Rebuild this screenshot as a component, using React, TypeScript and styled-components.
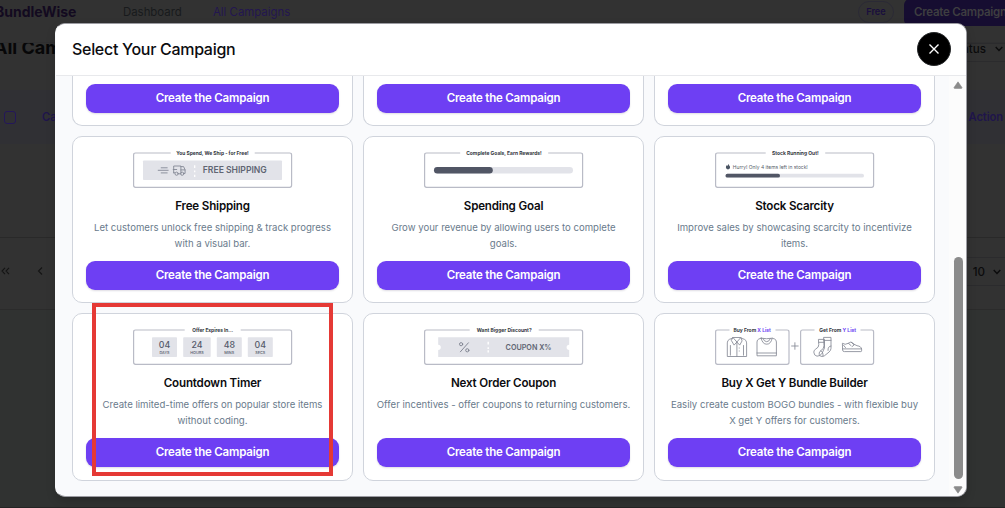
import React from "react";
import styled, { createGlobalStyle } from "styled-components";

const Global = createGlobalStyle`
  * { box-sizing: border-box; }
  html, body { margin: 0; padding: 0; overflow: hidden; }
  body { font-family: Inter, "Liberation Sans", sans-serif; background: #323232; }
`;

const Screen = styled.div`
  position: relative;
  width: 1005px;
  height: 508px;
  overflow: hidden;
  background: #323232;
`;

const NavBar = styled.header`
  display: flex;
  align-items: center;
  height: 43px;
  padding-bottom: 19px;
  border-bottom: 1px solid #2f2f30;
`;

const Brand = styled.div`
  width: 123px;
  margin-left: -5px;
  font-size: 14px;
  font-weight: 700;
  color: #130a20;
  white-space: nowrap;
`;

const NavLink = styled.a<{ $active?: boolean; $width: number }>`
  width: ${(p) => p.$width}px;
  margin-left: 5px;
  font-size: 11.4px;
  font-weight: 400;
  white-space: nowrap;
  color: ${(p) => (p.$active ? "#231650" : "#181a1c")};
`;

const PlanBadge = styled.span`
  display: grid;
  place-items: center;
  flex: none;
  width: 36px;
  height: 22px;
  margin-left: auto;
  border: 1px solid #2b2a35;
  border-radius: 11px;
  font-size: 9.2px;
  font-weight: 600;
  color: #190e3d;
`;

const NavButton = styled.button`
  flex: none;
  width: 112px;
  height: 27px;
  margin: 1px -11px 0 10px;
  padding: 0 0 0 10px;
  border: 0;
  border-radius: 6px;
  background: #160d31;
  color: #3e3e40;
  font: 600 11.5px Inter, sans-serif;
  letter-spacing: -0.25px;
  text-align: left;
  white-space: nowrap;
`;

const PageHead = styled.div`
  display: flex;
  justify-content: space-between;
  height: 47px;
  overflow: hidden;
`;

const PageTitle = styled.div`
  margin: -7px 0 0 -6px;
  font-size: 18px;
  line-height: 24px;
  font-weight: 700;
  color: #070708;
`;

const SelectBox = styled.div<{ $height: number; $gap: number; $right: number; $lift?: number }>`
  display: flex;
  align-items: center;
  justify-content: flex-end;
  gap: ${(p) => p.$gap}px;
  width: 100px;
  height: ${(p) => p.$height}px;
  padding: 0 ${(p) => p.$right}px ${(p) => p.$lift ?? 0}px 0;
  border-top: 1px solid #2b2b2d;
  border-bottom: 1px solid #2b2b2d;
  font-size: 11.6px;
  font-weight: 500;
  color: #0b0b0c;
`;

const TableHead = styled.div`
  display: flex;
  align-items: center;
  height: 54px;
  padding: 0 2px 0 4px;
  background: #303034;
  color: #1f154b;
  font-size: 11.2px;
  font-weight: 600;
`;

const Check = styled.span`
  width: 12px;
  height: 13px;
  border: 1px solid #24175a;
  border-radius: 3px;
  margin-right: 26px;
`;

const Push = styled.span`
  margin-left: auto;
  letter-spacing: -0.1px;
`;

const TableBody = styled.div`
  height: 94px;
  border-bottom: 1px solid #292929;
`;

const Pager = styled.div`
  display: flex;
  align-items: flex-start;
  justify-content: space-between;
  height: 72px;
  padding-top: 19px;
  border-bottom: 1px solid #2b2b2b;
`;

const PageArrows = styled.div`
  display: flex;
  gap: 27px;
  padding-top: 10px;
`;

const Foot = styled.div`
  height: 198px;
  background: #303231;
  border-bottom: 1px solid #242424;
`;

const Modal = styled.section`
  position: absolute;
  left: 55px;
  top: 23px;
  display: flex;
  flex-direction: column;
  width: 912px;
  height: 474px;
  overflow: hidden;
  border: 1px solid #9c9ca2;
  border-left-color: #f9fafc;
  border-radius: 10px;
  background: #f9fafc;
  box-shadow: 0 4px 10px rgba(0, 0, 0, 0.16);
`;

const ModalHeader = styled.div`
  display: flex;
  align-items: center;
  justify-content: space-between;
  flex: none;
  height: 52px;
  padding: 0 15px 0 16px;
  border-bottom: 1px solid #e8e9ec;
  background: #fff;
`;

const ModalTitle = styled.h2`
  margin: 0 0 2px;
  font-size: 16px;
  font-weight: 550;
  letter-spacing: -0.3px;
  color: #0c0c0f;
`;

const CloseButton = styled.button`
  display: grid;
  place-items: center;
  width: 34px;
  height: 34px;
  margin-bottom: 1px;
  padding: 0;
  border: 1px solid #26282a;
  border-radius: 50%;
  background: #000;
`;

const ModalBody = styled.div`
  display: flex;
  justify-content: space-between;
  flex: 1;
  min-height: 0;
`;

const Grid = styled.div`
  display: grid;
  grid-template-columns: repeat(3, 281px);
  grid-template-rows: 50px 167px 168px;
  gap: 10px;
  margin-left: 16px;
`;

const Card = styled.article<{ $cut?: boolean }>`
  display: flex;
  flex-direction: column;
  align-items: center;
  padding: ${(p) => (p.$cut ? "8px 13px 0" : "11px 13px 0")};
  border: 1px solid #d0d4dc;
  border-top-width: ${(p) => (p.$cut ? 0 : 1)}px;
  border-radius: ${(p) => (p.$cut ? "0 0 10px 10px" : "10px")};
  background: #fff;
`;

const CardTitle = styled.h3`
  margin: 7px 0 0;
  font-size: 11.6px;
  line-height: 19px;
  font-weight: 600;
  letter-spacing: -0.18px;
  color: #0c0c0f;
`;

const CardText = styled.p`
  height: 32px;
  margin: 4px -8px 9px;
  font-size: 9.6px;
  line-height: 16px;
  color: #6a7b8c;
  text-align: center;
  white-space: pre;
`;

const CreateButton = styled.button`
  flex: none;
  width: 253px;
  height: 29px;
  padding: 0 0 1px;
  border: 0;
  border-radius: 9px;
  background: #6e3ff3;
  box-shadow: 0 1px 2px rgba(20, 10, 60, 0.14);
  color: #fff;
  font: 600 11.5px Inter, sans-serif;
  letter-spacing: -0.2px;
`;

const ScrollTrack = styled.div`
  display: flex;
  flex-direction: column;
  align-items: center;
  width: 17px;
  padding: 5px 0 2px 1px;
  background: #fcfcfc;
`;

const ScrollThumb = styled.div`
  width: 9px;
  height: 222px;
  margin: 168px 0 7px;
  border-radius: 5px;
  background: #8b8b8b;
`;

const Highlight = styled.div`
  position: absolute;
  left: 92px;
  top: 303px;
  width: 241px;
  height: 173px;
  border: 4px solid #e53935;
`;

const ArtSvg = styled.svg`
  display: block;
  flex: none;
  width: 160px;
  height: 42px;
  font-family: Inter, sans-serif;
`;

const Art = ({ children }: { children: React.ReactNode }) => (
  <ArtSvg viewBox="0.8 0 160 42">{children}</ArtSvg>
);

const INK = "#4b5563";
const LINE = "#b9bbc6";
const FILL = "#e2e3e9";

interface FrameProps {
  x?: number;
  w?: number;
  gap: [number, number];
}

/* Rounded outline whose top edge is interrupted for a caption. */
const Frame = ({ x = 1.4, w = 158, gap }: FrameProps) => (
  <path
    d={`M${gap[0]} 5H${x + 2}q-2 0 -2 2V37.3q0 2 2 2H${x + w - 2}q2 0 2 -2V7q0 -2 -2 -2H${gap[1]}`}
    fill="none"
    stroke={LINE}
    strokeWidth="1.2"
  />
);

interface CaptionProps {
  x: number;
  len: number;
  children: React.ReactNode;
}

const Caption = ({ x, len, children }: CaptionProps) => (
  <text x={x} y="7" fontSize="5" fontWeight="700" fill="#333741" textLength={len} lengthAdjust="spacingAndGlyphs">
    {children}
  </text>
);

const ShippingArt = () => (
  <Art>
    <Frame gap={[38.5, 122.5]} />
    <Caption x={44} len={72.5}>You Spend, We Ship - for Free!</Caption>
    <rect x="10.8" y="12.5" width="139" height="19.5" rx="0.8" fill={FILL} />
    <g fill="none" stroke="#838895" strokeWidth="0.9" strokeLinecap="round" strokeLinejoin="round">
      <path d="M29 19.8h6M26 22.3h10M29 24.9h6" />
      <path d="M41.5 24.8V18h7.2v7.3M41.5 24.8h1M46.5 25.8h1.7M48.7 18.6h2.7l1.5 3.3v3.5h-1.2M48.7 21.9h4M41 21.5h3.5" />
      <circle cx="44.4" cy="25.7" r="1.6" />
      <circle cx="50" cy="25.7" r="1.6" />
    </g>
    <path d="M62.5 17.3v2.6M62.5 22.6v1.6M62.5 26.8v2.2" stroke="#fff" strokeWidth="1.3" />
    <text x="70.6" y="25.4" fontSize="8.8" fontWeight="600" fill="#606573" textLength="64" lengthAdjust="spacingAndGlyphs">FREE SHIPPING</text>
  </Art>
);

const GoalArt = () => (
  <Art>
    <Frame gap={[37, 125]} />
    <Caption x={43} len={75.5}>Complete Goals, Earn Rewards!</Caption>
    <rect x="10.8" y="19" width="139" height="6.6" rx="3.3" fill={FILL} />
    <rect x="10.8" y="19" width="58.8" height="6.6" rx="3.3" fill="#515665" />
  </Art>
);

const StockArt = () => (
  <Art>
    <Frame gap={[51.5, 111]} />
    <Caption x={57.7} len={46.8}>Stock Running Out!</Caption>
    <path d="M13.9 15.7c.3 1 2 2.2 2 3.6a2.1 2.1 0 0 1-4.2 0c0-1.1.6-1.3.7-2 .5.2.7.4.8.8.5-.7.7-1.4.7-2.4z" fill={INK} />
    <text x="18.6" y="20.6" fontSize="5" fill="#555b68" textLength="75" lengthAdjust="spacingAndGlyphs">Hurry! Only 4 items left in stock!</text>
    <rect x="11.3" y="25.8" width="138.5" height="3.8" rx="1.9" fill={FILL} />
    <rect x="11.3" y="25.8" width="54.5" height="3.8" rx="1.9" fill="#515665" />
  </Art>
);

const TIMER = [
  { x: 19.8, w: 25, n: "04", unit: "DAYS" },
  { x: 51, w: 27.5, n: "24", unit: "HOURS" },
  { x: 84.6, w: 25, n: "48", unit: "MINS" },
  { x: 115.6, w: 25, n: "04", unit: "SECS" },
];

const TimerArt = () => (
  <Art>
    <Frame gap={[52.5, 108.5]} />
    <Caption x={60} len={41}>Offer Expires In...</Caption>
    {TIMER.map((t) => (
      <g key={t.x} textAnchor="middle" fill="#555a69">
        <rect x={t.x} y="12.2" width={t.w} height="19.8" rx="0.8" fill={FILL} />
        <text x={t.x + t.w / 2} y="23" fontSize="8.8" fontWeight="500">{t.n}</text>
        <text x={t.x + t.w / 2} y="28.6" fontSize="3.8" fontWeight="500">{t.unit}</text>
      </g>
    ))}
  </Art>
);

const CouponArt = () => (
  <Art>
    <Frame gap={[46.5, 115.5]} />
    <Caption x={53.5} len={55}>Want Bigger Discount?</Caption>
    <path d="M15 12.2h131v7.5a2.6 2.6 0 0 0 0 5.2v7.1h-131v-7.1a2.6 2.6 0 0 0 0-5.2z" fill={FILL} />
    <g fill="none" stroke="#7b7f8c" strokeWidth="0.9" strokeLinecap="round">
      <path d="M45.2 17.8l-8 9" />
      <circle cx="37.9" cy="19.2" r="1.6" />
      <circle cx="44.1" cy="25.3" r="1.6" />
    </g>
    <path d="M65 16.8v2.8M65 22.3v1.6M65 25.2v2.2" stroke="#fff" strokeWidth="1.4" />
    <text x="82.4" y="24.8" fontSize="7.6" fontWeight="600" fill="#606573" textLength="46" lengthAdjust="spacingAndGlyphs">COUPON X%</text>
  </Art>
);

const BundleArt = () => (
  <Art>
    <Frame w={73.4} gap={[15.3, 61.3]} />
    <Frame x={86.4} w={73} gap={[100.3, 146.3]} />
    <Caption x={19.2} len={37.5}>Buy From <tspan fill="#6e3ff3">X List</tspan></Caption>
    <Caption x={105} len={37}>Get From <tspan fill="#6e3ff3">Y List</tspan></Caption>
    <g fill="none" stroke="#858995" strokeWidth="0.85" strokeLinejoin="round" strokeLinecap="round">
      <path d="M77.4 21h6.6M80.7 17.7v6.6" />
      {/* collared shirt */}
      <path d="M18.5 13.2l-3.2 1.1q-2.2 1-2.2 3.6v13.6h19.3V17.9q0-2.6-2.2-3.6l-3.2-1.1" />
      <path d="M18.7 12.5h8l1.2 3.4-2.4 4.2-2.8-3.1-2.8 3.1-2.5-4.2zM18.8 12.6l3.9 4.4 3.9-4.4M22.7 17v14.3M16.2 20.5v9.7M29.3 20.5v9.7M25 23h.1M25 26h.1" />
      {/* crew-neck top */}
      <path d="M47 13.2l-2.4.8q-1.8.8-1.8 3v13.8h19.4V17q0-2.2-1.8-3l-2.4-.8q-5.5 1.1-11 0zM47 13.2q1.2 6 5.5 6t5.5-6M48.8 13.6q1.2 3.1 3.7 3.1t3.7-3.1M42.8 28h19.4" />
      {/* pair of socks */}
      <path d="M104.6 14.4h5.7v8.5l-2.3 5.2q-2 3.3-5.2 3.1-3.2-.7-3.2-4.1 0-2 2-3.1 3.2-1.6 3-4zM104.6 17.3h5.6" />
      <path d="M109.8 12.4h7v11q-.1 2-1.9 3.6l-4.7 3.8q-2.4 1.3-4.2.2-1.3-1-1-3 .2-1.5 1.8-2.5 3.1-1.7 3-4.4zM109.8 15.4h7M116.8 21q-3.2.1-3 4.4M106.5 26q2.7.5 2.3 5" />
      {/* sneaker */}
      <path d="M128.5 18.5q2.3 1.8 5.6-.2l2.5-1.2q2 .2 3.4 2.2l2.8 1.4q4.4.6 4.6 3.5v1.6q0 .8-.8.8h-16.4q-1.8 0-1.8-1.2zM128.4 23.9h19M134.2 18.3l2.7 2.4M137 17.2l2.4 2.4M138 21.5l2.2-1.8M129.3 20.2l2 2.4" />
    </g>
  </Art>
);

const CARDS = [
  { art: <ShippingArt />, title: "Free Shipping", text: "Let customers unlock free shipping & track progress\nwith a visual bar." },
  { art: <GoalArt />, title: "Spending Goal", text: "Grow your revenue by allowing users to complete\ngoals." },
  { art: <StockArt />, title: "Stock Scarcity", text: "Improve sales by showcasing scarcity to incentivize\nitems." },
  { art: <TimerArt />, title: "Countdown Timer", text: "Create limited-time offers on popular store items\nwithout coding." },
  { art: <CouponArt />, title: "Next Order Coupon", text: "Offer incentives - offer coupons to returning customers." },
  { art: <BundleArt />, title: "Buy X Get Y Bundle Builder", text: "Easily create custom BOGO bundles - with flexible buy\nX get Y offers for customers." },
];

const Chevron = () => (
  <svg width="8" height="6" viewBox="0 0 8 6" fill="none" stroke="#0b0b0c" strokeWidth="1.4">
    <path d="M0.7 1l3.3 3.4L7.3 1" />
  </svg>
);

export default function App() {
  return (
    <Screen>
      <Global />
      <NavBar>
        <Brand>BundleWise</Brand>
        <NavLink $width={85}>Dashboard</NavLink>
        <NavLink $active $width={90}>All Campaigns</NavLink>
        <PlanBadge>Free</PlanBadge>
        <NavButton>Create Campaign</NavButton>
      </NavBar>
      <PageHead>
        <PageTitle>All Campaigns</PageTitle>
        <SelectBox $height={19} $gap={9} $right={2} $lift={8}>
          Status <Chevron />
        </SelectBox>
      </PageHead>
      <TableHead>
        <Check />
        Campaign
        <Push>Action</Push>
      </TableHead>
      <TableBody />
      <Pager>
        <PageArrows>
          <svg width="10" height="8" viewBox="0 0 10 8" fill="none" stroke="#141414" strokeWidth="1.1">
            <path d="M5 .8L2 4l3 3.2M9 .8L6 4l3 3.2" />
          </svg>
          <svg width="6" height="8" viewBox="0 0 6 8" fill="none" stroke="#141414" strokeWidth="1.1">
            <path d="M5 .5L1.5 4 5 7.5" />
          </svg>
        </PageArrows>
        <SelectBox $height={29} $gap={8} $right={4}>
          10 <Chevron />
        </SelectBox>
      </Pager>
      <Foot />

      <Modal>
        <ModalHeader>
          <ModalTitle>Select Your Campaign</ModalTitle>
          <CloseButton aria-label="Close">
            <svg width="12" height="12" viewBox="0 0 12 12" stroke="#fff" strokeWidth="1.4">
              <path d="M1.5 1.5l9 9M10.5 1.5l-9 9" />
            </svg>
          </CloseButton>
        </ModalHeader>
        <ModalBody>
          <Grid>
            {[0, 1, 2].map((i) => (
              <Card key={i} $cut>
                <CreateButton>Create the Campaign</CreateButton>
              </Card>
            ))}
            {CARDS.map((c) => (
              <Card key={c.title}>
                {c.art}
                <CardTitle>{c.title}</CardTitle>
                <CardText>{c.text}</CardText>
                <CreateButton>Create the Campaign</CreateButton>
              </Card>
            ))}
          </Grid>
          <ScrollTrack>
            <svg width="10" height="8" viewBox="0 0 10 8">
              <path d="M5 .8L9 6.5Q9 7.6 8 7.6H2Q1 7.6 1 6.5z" fill="#8b8b8b" stroke="#8b8b8b" strokeWidth=".6" />
            </svg>
            <ScrollThumb />
            <svg width="10" height="8" viewBox="0 0 10 8">
              <path d="M5 7.2L1 1.5Q1 .4 2 .4H8Q9 .4 9 1.5z" fill="#8b8b8b" stroke="#8b8b8b" strokeWidth=".6" />
            </svg>
          </ScrollTrack>
        </ModalBody>
      </Modal>
      <Highlight />
    </Screen>
  );
}
